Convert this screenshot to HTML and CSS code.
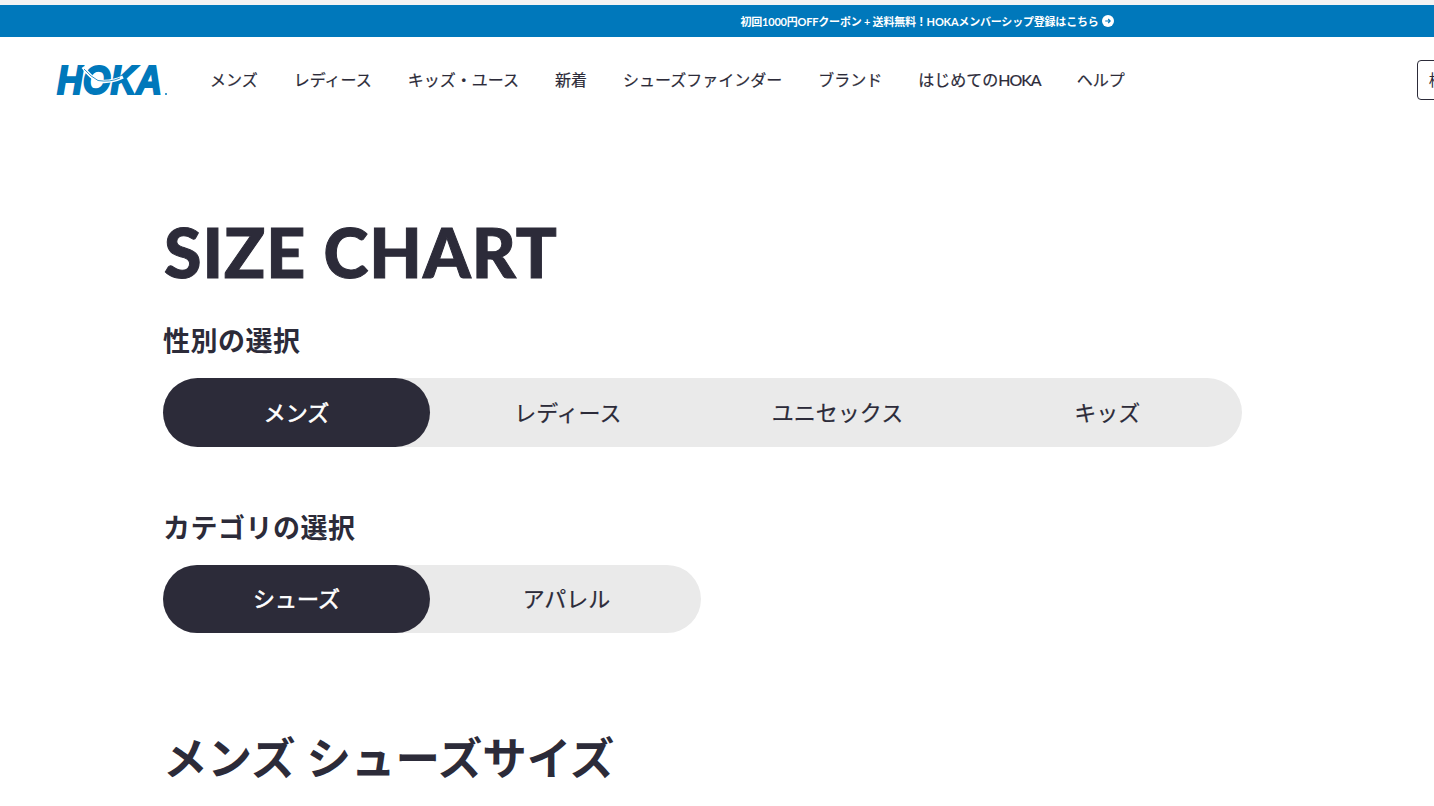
FILE: index.html
```html
<!DOCTYPE html>
<html lang="ja">
<head>
  <meta charset="UTF-8">
  <title>SIZE CHART | HOKA</title>
  <link rel="stylesheet" href="styles.css">
</head>
<body>

<div class="promo">
  <a class="promo-link">初回1000円OFFクーポン + 送料無料！HOKAメンバーシップ登録はこちら
    <svg class="promo-icon" width="12" height="12" viewBox="0 0 12 12">
      <circle cx="6" cy="6" r="6" fill="#fff"/>
      <path d="M3.2 6h5M6.2 4 8.2 6 6.2 8" fill="none" stroke="#0078bb" stroke-width="1.1"/>
    </svg>
  </a>
</div>

<header class="header">
  <svg class="logo" width="112" height="32" viewBox="0 0 112 32">
    <text class="logo-text" x="1" y="30" textLength="105" lengthAdjust="spacingAndGlyphs">HOKA</text>
    <path d="M27 3 Q34 13 42 17 Q54 19 67 13" fill="none" stroke="#fff" stroke-width="3.4"/>
    <path d="M28 5 Q35 13 42 16.5 Q54 18.5 64 14" fill="none" stroke="#0078bb" stroke-width="0.8"/>
    <circle cx="110" cy="30" r="1" fill="#0078bb"/>
  </svg>
  <nav class="nav">
    <a>メンズ</a>
    <a>レディース</a>
    <a>キッズ・ユース</a>
    <a>新着</a>
    <a>シューズファインダー</a>
    <a>ブランド</a>
    <a>はじめての<span class="nav-latin">HOKA</span></a>
    <a>ヘルプ</a>
  </nav>
  <div class="search">検索</div>
</header>

<main class="main">
  <h1 class="title">SIZE CHART</h1>

  <h2 class="label">性別の選択</h2>
  <div class="toggle toggle-wide">
    <button class="active">メンズ</button>
    <button>レディース</button>
    <button>ユニセックス</button>
    <button>キッズ</button>
  </div>

  <h2 class="label label-second">カテゴリの選択</h2>
  <div class="toggle toggle-narrow">
    <button class="active">シューズ</button>
    <button>アパレル</button>
  </div>

  <h2 class="section-title">メンズ シューズサイズ</h2>
</main>

</body>
</html>
```

FILE: styles.css
```css
html, body {
  height: 806px;
  overflow: hidden;
}

body {
  margin: 0;
  padding-top: 5px;
  background: #fff;
  color: #2c2b39;
  font-family: 'Lato', 'Noto Sans CJK JP', sans-serif;
  box-shadow: inset 0 5px 0 #f3f3f3;
}

.promo {
  height: 32px;
  padding-left: 420px;
  background: #0078bb;
  display: flex;
  justify-content: center;
  align-items: center;
  color: #fff;
  font-size: 11px;
  font-weight: 700;
  letter-spacing: -0.2px;
}

.promo-link {
  display: flex;
  align-items: center;
  gap: 3px;
}

.header {
  height: 86px;
  display: flex;
  align-items: center;
  padding-left: 56px;
  overflow: hidden;
}

.logo {
  flex: none;
  overflow: visible;
}

.logo-text {
  font-family: 'Liberation Sans', sans-serif;
  font-size: 40px;
  font-weight: 700;
  font-style: italic;
  fill: #0078bb;
  stroke: #0078bb;
  stroke-width: 2;
}

.nav {
  display: flex;
  gap: 36px;
  margin-left: 42px;
  margin-top: -2px;
  font-size: 16px;
  font-weight: 400;
  white-space: nowrap;
  -webkit-text-stroke: 0.2px;
}

.nav-latin {
  letter-spacing: -1px;
}

.search {
  flex: none;
  box-sizing: border-box;
  width: 120px;
  height: 40px;
  line-height: 38px;
  margin-left: 292px;
  padding-left: 11px;
  border: 1px solid #2c2b39;
  border-radius: 4px;
  font-size: 16px;
}

.main {
  padding: 92px 0 0 163px;
}

.title {
  margin: 0;
  padding-left: 1px;
  font-size: 68px;
  line-height: 74px;
  font-weight: 900;
  letter-spacing: 1px;
  -webkit-text-stroke: 1px;
}

.label {
  margin: 33px 0 0;
  font-size: 27px;
  line-height: 38px;
  font-weight: 700;
  letter-spacing: 0.5px;
}

.label-second {
  margin-top: 62px;
}

.toggle {
  display: flex;
  height: 69px;
  margin-top: 18px;
  background: #eaeaea;
  border-radius: 35px;
}

.toggle-wide {
  width: 1079px;
}

.toggle-narrow {
  width: 538px;
  height: 68px;
}

.toggle button {
  flex: 1;
  padding: 0 0 4px;
  border: none;
  background: none;
  color: inherit;
  font-family: inherit;
  font-size: 22px;
  font-weight: 400;
  border-radius: 35px;
  -webkit-text-stroke: 0.2px;
}

.toggle .active {
  flex: none;
  width: 267px;
  margin-right: 3px;
  background: #2c2b39;
  color: #fff;
  -webkit-text-stroke: 0.6px;
}

.toggle-narrow .active {
  margin-right: 2px;
}

.section-title {
  margin: 95px 0 0;
  font-size: 44.5px;
  line-height: 60px;
  font-weight: 700;
}
```
